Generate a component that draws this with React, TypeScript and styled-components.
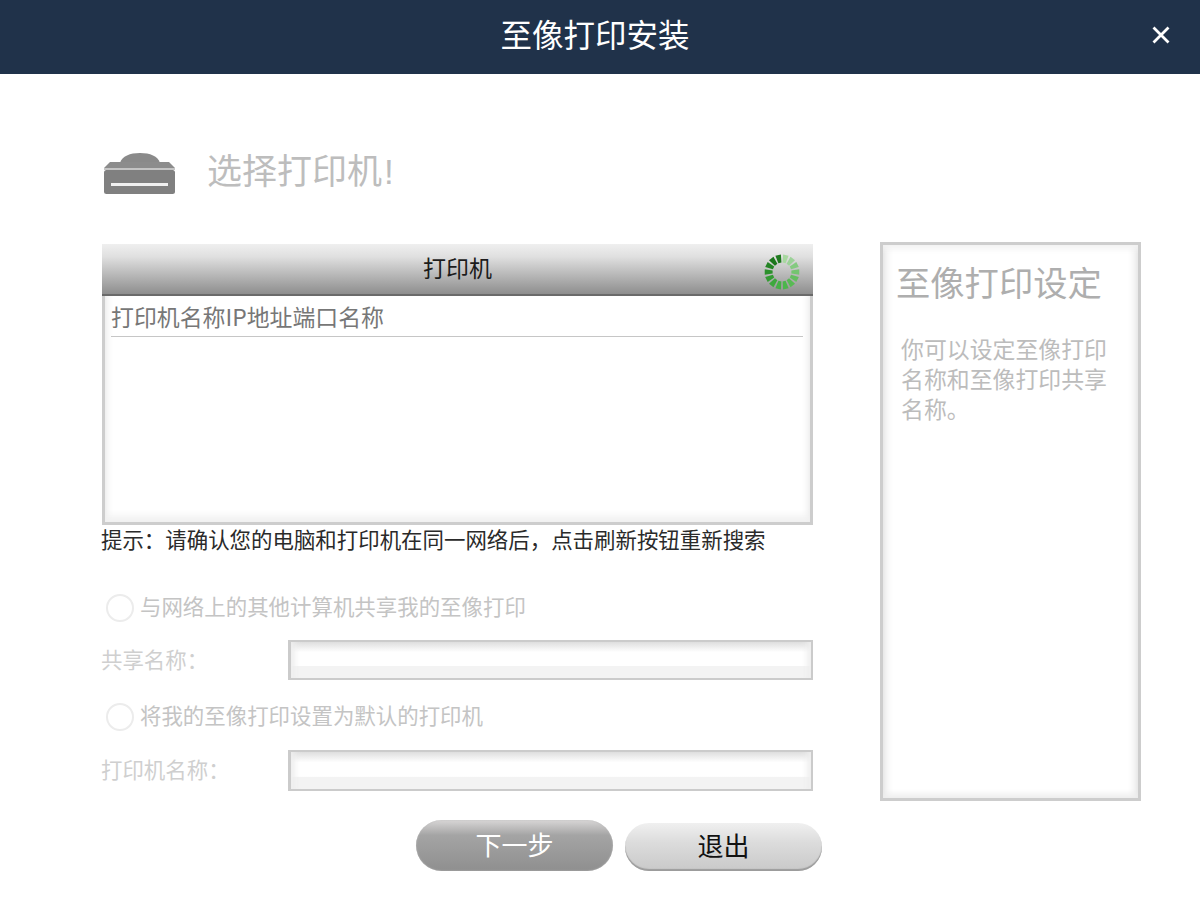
import React from "react";
import styled, { createGlobalStyle } from "styled-components";

const Global = createGlobalStyle`
  html, body { margin: 0; padding: 0; background: #fff; }
  body { font-family: "Noto Sans CJK SC", "Liberation Sans", sans-serif; }
  * { box-sizing: border-box; }
`;

const Page = styled.div`
  width: 1200px;
  height: 900px;
  overflow: hidden;
  background: #fff;
  display: flex;
  flex-direction: column;
`;

const TitleBar = styled.header`
  position: relative;
  height: 74px;
  flex: none;
  background: #20324a;
  display: flex;
  align-items: center;
  justify-content: center;
  padding: 0 10px 8px 0;
`;

const Title = styled.h1`
  margin: 0;
  font-size: 31.5px;
  font-weight: 400;
  color: #fff;
`;

const Close = styled.button`
  position: absolute;
  right: 28px;
  top: 24px;
  width: 22px;
  height: 22px;
  padding: 0;
  border: 0;
  background: none;
  display: block;
`;

const Content = styled.div`
  padding: 78px 59px 0 102px;
  display: flex;
  flex-direction: column;
`;

const Heading = styled.div`
  height: 42px;
  display: flex;
  align-items: center;
  gap: 29px;
  padding-left: 2px;
`;

const HeadingText = styled.span`
  font-size: 35px;
  color: #bdbdbd;
  line-height: 42px;
  padding-bottom: 6px;
`;

const Bang = styled.span`
  margin-left: 2px;
  font-family: "Liberation Sans", sans-serif;
`;

const Columns = styled.div`
  margin-top: 48px;
  display: grid;
  grid-template-columns: 711px 261px;
  column-gap: 67px;
  align-items: start;
`;

const LeftColumn = styled.div`
  display: flex;
  flex-direction: column;
  padding-top: 2px;
`;

const Table = styled.section`
  height: 281px;
  display: flex;
  flex-direction: column;
  border: 3px solid #cdcdcd;
  border-top: 0;
  background: #fff;
  box-shadow: inset 0 -14px 8px -8px #f0f0f0, inset 8px 0 8px -8px #ddd, inset -8px 0 8px -8px #ddd;
`;

const TableHead = styled.div`
  position: relative;
  height: 52px;
  margin: 0 -3px;
  flex: none;
  background: linear-gradient(#efefef, #e0e0e0 25%, #8e8e8e);
  border-bottom: 2px solid #6a6a6a;
  display: flex;
  align-items: center;
  justify-content: center;
  padding-bottom: 4px;
  font-size: 23px;
  color: #1c1c1c;
`;

const Spinner = styled.svg`
  position: absolute;
  right: 12px;
  top: 9px;
`;

const ColumnRow = styled.div`
  margin: 0 7px 0 6px;
  height: 41px;
  border-bottom: 1px solid #c6c6c6;
  display: flex;
  align-items: center;
  font-size: 22.9px;
  color: #777;
  white-space: nowrap;
`;

const Hint = styled.p`
  margin: 0 0 0 -1px;
  height: 30px;
  line-height: 28px;
  font-size: 21.45px;
  color: #2a2a2a;
  white-space: nowrap;
`;

const RadioRow = styled.label<{ $top: number }>`
  margin-top: ${(p) => p.$top}px;
  height: 30px;
  display: flex;
  align-items: center;
  gap: 6px;
  padding-left: 4px;
  font-size: 21.45px;
  color: #c4c4c4;
  white-space: nowrap;
`;

const RadioText = styled.span`
  padding-bottom: 6px;
`;

const RadioDot = styled.span`
  width: 28px;
  height: 28px;
  border-radius: 50%;
  border: 2px solid #ececec;
  background: #fff;
  flex: none;
`;

const FieldRow = styled.div<{ $top: number }>`
  margin-top: ${(p) => p.$top}px;
  display: grid;
  grid-template-columns: 186px 525px;
  align-items: center;
`;

const FieldLabel = styled.span`
  font-size: 21.45px;
  color: #cfcfcf;
  white-space: nowrap;
  margin-left: -1px;
  padding-bottom: 4px;
`;

const FieldInput = styled.div<{ $height: number }>`
  height: ${(p) => p.$height}px;
  border: 2px solid #cbcbcb;
  border-left-width: 3px;
  background: linear-gradient(#dedede, #fff 28%, #fff 66%, #f3f3f3 68%, #f3f3f3);
  box-shadow: inset 10px 0 6px -6px #eee, inset -10px 0 6px -6px #eee;
`;

const Buttons = styled.div`
  margin-top: 29px;
  margin-right: -9px;
  display: flex;
  justify-content: flex-end;
  align-items: flex-end;
  gap: 12px;
`;

const Pill = styled.button<{ $primary?: boolean }>`
  width: 197px;
  height: ${(p) => (p.$primary ? 51 : 48)}px;
  border-radius: 26px;
  border: 0;
  padding: 0 0 ${(p) => (p.$primary ? 4 : 5)}px;
  font: inherit;
  font-size: 26px;
  color: ${(p) => (p.$primary ? "#fff" : "#111")};
  background: ${(p) =>
    p.$primary
      ? "linear-gradient(#d8d6d6, #a4a4a4 30%, #8f8f8f 100%)"
      : "linear-gradient(#f0f0f0, #dcdcdc 40%, #c9c9c9 100%)"};
  box-shadow: ${(p) => (p.$primary ? "inset 0 0 2px #bbb" : "inset 0 -2px 1px #9c9c9c")};
`;

const SidePanel = styled.aside`
  height: 559px;
  border: 3px solid #cdcdcd;
  background: #fff;
  box-shadow: inset 0 12px 6px -8px #f2f2f2, inset 0 -12px 6px -8px #ededed,
    inset 10px 0 8px -8px #ddd, inset -10px 0 8px -8px #ddd;
  padding: 12px 13px 0;
`;

const SideTitle = styled.h2`
  margin: 0;
  font-size: 34.3px;
  line-height: 48px;
  font-weight: 400;
  color: #aeaeae;
  white-space: nowrap;
`;

const SideText = styled.p`
  margin: 28px 0 0 5px;
  font-size: 22.9px;
  line-height: 30px;
  color: #bcbcbc;
`;

const PrinterIcon = () => (
  <svg width="74" height="42" viewBox="0 0 74 42" aria-hidden="true">
    <path d="M16 11C18 4 26 1 36 1s18 3 20 10z" fill="#8a8a8a" />
    <path d="M6 10h59l6 6H0z" fill="#8c8c8c" />
    <rect x="0" y="18" width="71" height="24" rx="2.5" fill="#808080" />
    <rect x="0" y="16" width="71" height="2" fill="#c4c4c4" />
    <rect x="7" y="31" width="57" height="3" fill="#f0f0f0" />
  </svg>
);

const segments = [
  "#a8d8a0", "#9cd298", "#84ca80", "#74c470", "#64be60", "#58ba54", "#4cb64c",
  "#46b046", "#3ea83e", "#349c34", "#2c902c", "#248424", "#1c761c", "#1f7a1f",
];

const wedge = (i: number, total: number) => {
  const half = (360 / total - 7) / 2;
  const rad = (deg: number) => (deg * Math.PI) / 180;
  const point = (r: number, deg: number) =>
    `${(r * Math.sin(rad(deg))).toFixed(2)} ${(-r * Math.cos(rad(deg))).toFixed(2)}`;
  const mid = ((i + 0.5) * 360) / total;
  return `M${point(17.5, mid - half)}L${point(17.5, mid + half)}L${point(9.5, mid + half)}L${point(9.5, mid - half)}z`;
};

const LoadingRing = () => (
  <Spinner width="38" height="38" viewBox="-19 -19 38 38" aria-hidden="true">
    {segments.map((color, i) => (
      <path key={i} d={wedge(i, segments.length)} fill={color} />
    ))}
  </Spinner>
);

const HINT = "提示\uFF1A请确认您的电脑和打印机在同一网络后\uFF0C点击刷新按钮重新搜索";
const SHARE_LABEL = "共享名称\uFF1A";
const PRINTER_LABEL = "打印机名称\uFF1A";

export default function App() {
  return (
    <Page>
      <Global />
      <TitleBar>
        <Title>至像打印安装</Title>
        <Close aria-label="关闭">
          <svg width="22" height="22" viewBox="0 0 22 22">
            <path d="M3.5 3.5l15 15M18.5 3.5l-15 15" stroke="#fff" strokeWidth="2.8" fill="none" />
          </svg>
        </Close>
      </TitleBar>
      <Content>
        <Heading>
          <PrinterIcon />
          <HeadingText>
            选择打印机<Bang>!</Bang>
          </HeadingText>
        </Heading>
        <Columns>
          <LeftColumn>
            <Table>
              <TableHead>
                打印机
                <LoadingRing />
              </TableHead>
              <ColumnRow>打印机名称IP地址端口名称</ColumnRow>
            </Table>
            <Hint>{HINT}</Hint>
            <RadioRow $top={38}>
              <RadioDot />
              <RadioText>与网络上的其他计算机共享我的至像打印</RadioText>
            </RadioRow>
            <FieldRow $top={17}>
              <FieldLabel>{SHARE_LABEL}</FieldLabel>
              <FieldInput $height={40} />
            </FieldRow>
            <RadioRow $top={22}>
              <RadioDot />
              <RadioText>将我的至像打印设置为默认的打印机</RadioText>
            </RadioRow>
            <FieldRow $top={18}>
              <FieldLabel>{PRINTER_LABEL}</FieldLabel>
              <FieldInput $height={41} />
            </FieldRow>
            <Buttons>
              <Pill $primary>下一步</Pill>
              <Pill>退出</Pill>
            </Buttons>
          </LeftColumn>
          <SidePanel>
            <SideTitle>至像打印设定</SideTitle>
            <SideText>你可以设定至像打印名称和至像打印共享名称。</SideText>
          </SidePanel>
        </Columns>
      </Content>
    </Page>
  );
}
